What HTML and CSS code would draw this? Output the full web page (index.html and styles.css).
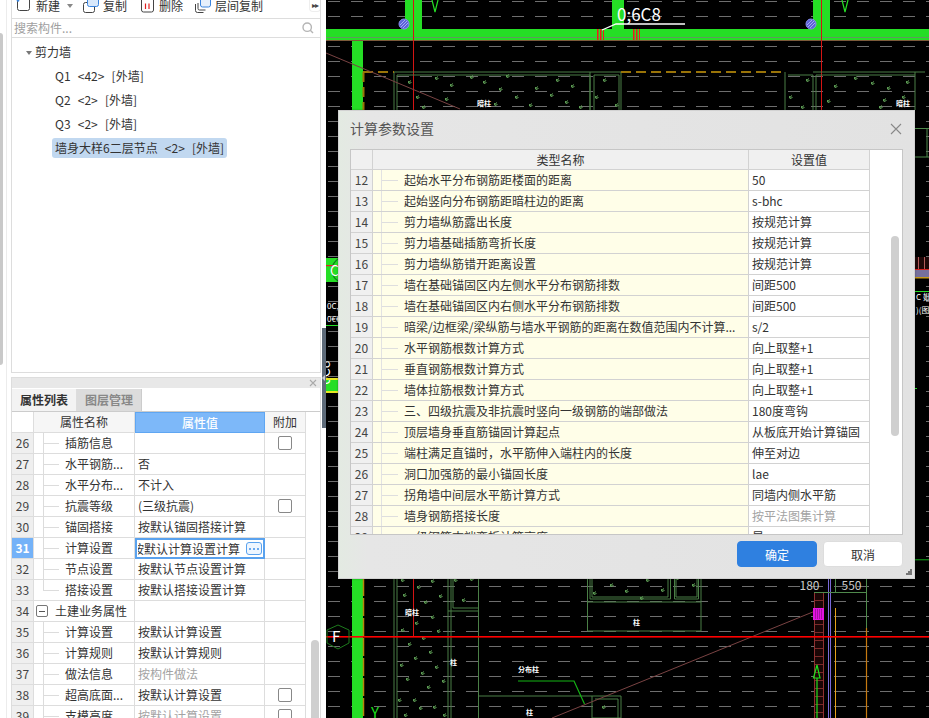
FILE: index.html
```html
<!DOCTYPE html>
<html lang="zh-CN">
<head>
<meta charset="utf-8">
<title>计算参数设置</title>
<link rel="stylesheet" href="styles.css">
</head>
<body>
<div class="app">
  <div class="gutter"><div class="gutter-thumb"></div></div>
  <div class="side">
    <section class="upper">
      <div class="toolbar">
        <svg class="ic ic-new" viewBox="0 0 15 11"><path d="M1.5 0V8.5a2 2 0 0 0 2 2h8a2 2 0 0 0 2-2V0" fill="none" stroke="#444"/><circle cx="2" cy="0.5" r="1.3" fill="#3b84de"/></svg>
        <span class="tool-label">新建</span>
        <span class="caret"></span>
        <svg class="ic ic-copy" viewBox="0 0 16 13"><rect x="0.5" y="2.5" width="11" height="10" rx="2" fill="#fff" stroke="#444"/><path d="M4.5 0V4.5a2 2 0 0 0 2 2h7a2 2 0 0 0 2-2V0" fill="#d8e8fb" stroke="#3b84de"/></svg>
        <span class="tool-label">复制</span>
        <svg class="ic ic-trash" viewBox="0 0 13 13"><path d="M0.5 0V10a2 2 0 0 0 2 2h8a2 2 0 0 0 2-2V0" fill="none" stroke="#444"/><path d="M4.5 3.5V9M8 3.5V9" stroke="#e02020" stroke-width="1.2"/></svg>
        <span class="tool-label">删除</span>
        <svg class="ic ic-layer" viewBox="0 0 16 13"><path d="M0.5 4V10.5a2 2 0 0 0 2 2h6" fill="none" stroke="#444"/><path d="M3 3V8.5a1.5 1.5 0 0 0 1.500 1.500h6" fill="none" stroke="#444"/><path d="M5.500 0V5a2 2 0 0 0 2 2h6a2 2 0 0 0 2-2V0" fill="#e6f0fc" stroke="#3b84de"/></svg>
        <span class="tool-label">层间复制</span>
        <span class="more">▸▸</span>
      </div>
      <div class="search">
        <span class="search-text">搜索构件...</span>
        <svg class="search-ic" viewBox="0 0 12 12"><circle cx="5.200" cy="5.200" r="4.200" fill="none" stroke="#b5b5b5" stroke-width="1.400"/><path d="M8.300 8.300L11 11" stroke="#b5b5b5" stroke-width="1.400"/></svg>
      </div>
      <div class="tree">
        <div class="tree-root"><span class="tree-caret"></span>剪力墙</div>
        <div class="tree-item">Q1 &lt;42&gt; [外墙]</div>
        <div class="tree-item">Q2 &lt;2&gt; [外墙]</div>
        <div class="tree-item">Q3 &lt;2&gt; [外墙]</div>
        <div class="tree-item tree-selected">墙身大样6二层节点 &lt;2&gt; [外墙]</div>
      </div>
    </section>
    <section class="props">
      <div class="props-head"><svg class="props-close" viewBox="0 0 8 8"><path d="M1 1L7 7M7 1L1 7" stroke="#aaa" stroke-width="1.100"/></svg></div>
      <div class="tabs">
        <div class="tab tab-on">属性列表</div>
        <div class="tab tab-off">图层管理</div>
      </div>
      <div class="props-body">
        <div class="ptable">
          <div class="prow phead"><div class="pnum"></div><div class="pname-h">属性名称</div><div class="pval-h">属性值</div><div class="padd">附加</div></div>
          <div class="prow"><div class="pnum">26</div><div class="pname tl">插筋信息</div><div class="pval"></div><div class="padd"><span class="check"></span></div></div>
          <div class="prow"><div class="pnum">27</div><div class="pname tl">水平钢筋...</div><div class="pval">否</div><div class="padd"></div></div>
          <div class="prow"><div class="pnum">28</div><div class="pname tl">水平分布...</div><div class="pval">不计入</div><div class="padd"></div></div>
          <div class="prow"><div class="pnum">29</div><div class="pname tl">抗震等级</div><div class="pval">(三级抗震)</div><div class="padd"><span class="check"></span></div></div>
          <div class="prow"><div class="pnum">30</div><div class="pname tl">锚固搭接</div><div class="pval">按默认锚固搭接计算</div><div class="padd"></div></div>
          <div class="prow"><div class="pnum pnum-on">31</div><div class="pname tl">计算设置</div><div class="pval pval-edit"><span class="edit-text"><span class="edit-inner">按默认计算设置计算</span></span><span class="edit-btn"><i></i><i></i><i></i></span></div><div class="padd"></div></div>
          <div class="prow"><div class="pnum">32</div><div class="pname tl">节点设置</div><div class="pval">按默认节点设置计算</div><div class="padd"></div></div>
          <div class="prow"><div class="pnum">33</div><div class="pname tl tl-end">搭接设置</div><div class="pval">按默认搭接设置计算</div><div class="padd"></div></div>
          <div class="prow"><div class="pnum">34</div><div class="pname pgroup"><span class="minus"></span>土建业务属性</div><div class="pval"></div><div class="padd"></div></div>
          <div class="prow"><div class="pnum">35</div><div class="pname tl">计算设置</div><div class="pval">按默认计算设置</div><div class="padd"></div></div>
          <div class="prow"><div class="pnum">36</div><div class="pname tl">计算规则</div><div class="pval">按默认计算规则</div><div class="padd"></div></div>
          <div class="prow"><div class="pnum">37</div><div class="pname tl">做法信息</div><div class="pval muted">按构件做法</div><div class="padd"></div></div>
          <div class="prow"><div class="pnum">38</div><div class="pname tl">超高底面...</div><div class="pval">按默认计算设置</div><div class="padd"><span class="check"></span></div></div>
          <div class="prow"><div class="pnum">39</div><div class="pname tl">支模高度</div><div class="pval muted">按默认计算设置</div><div class="padd"><span class="check"></span></div></div>
        </div>
        <div class="props-scroll"><div class="props-thumb"></div></div>
      </div>
    </section>
  </div>
  <div class="rail"><div class="rail-handle"><span class="rail-arrow"></span></div></div>
  <div class="canvas">
    <svg class="cad" viewBox="326 0 603 718" xmlns="http://www.w3.org/2000/svg">
      <defs>
        <pattern id="dashes" x="326" y="1" width="23" height="15" patternUnits="userSpaceOnUse"><rect x="2" y="0" width="12" height="1" fill="#6e6e6e"/></pattern>
        <pattern id="redhatch" x="0" y="0" width="3" height="40" patternUnits="userSpaceOnUse"><rect width="1.500" height="40" fill="#ee1c1c"/></pattern>
        <pattern id="ladder" x="814" y="0" width="10" height="8" patternUnits="userSpaceOnUse"><rect width="10" height="1" fill="#7a2a2a"/></pattern>
        <pattern id="vbar" x="0" y="0" width="6" height="10" patternUnits="userSpaceOnUse"><rect width="1" height="10" fill="#b25a5a"/></pattern>
        <path id="leaf" d="M-2 1L1 -1.500M-1.500 -1L-1 1.500L1.500 0.500" fill="none" stroke="#63a75a" stroke-width="1"/>
      </defs>
      <rect x="326" y="0" width="603" height="718" fill="#000"/>
      <rect x="326" y="0" width="603" height="718" fill="url(#dashes)"/>

      <g fill="#25de25">
        <rect x="326" y="29" width="603" height="11"/>
        <rect x="405" y="0" width="17" height="29"/>
        <rect x="612" y="0" width="12" height="29"/>
        <rect x="813" y="0" width="17" height="29"/>
        <rect x="352" y="41" width="11" height="677"/>
        <rect x="326" y="258" width="12" height="24"/>
        <rect x="326" y="380" width="12" height="11"/>
      </g>
      <rect x="326" y="37" width="603" height="1" fill="#5e9a5e"/>
      <rect x="326" y="40" width="603" height="1" fill="#7b5a3a"/>
      <path d="M432 0L435 12L438 0M842 0L845 12L848 0" fill="none" stroke="#25de25" stroke-width="1.200"/>

      <rect x="596" y="29" width="8" height="11" fill="url(#redhatch)"/>
      <rect x="632" y="29" width="8" height="11" fill="url(#redhatch)"/>

      <g fill="#5b62d8" stroke="#8a90ee"><circle cx="404" cy="24" r="5"/><circle cx="811" cy="24" r="5"/></g>
      <path d="M401 27L407 21M403 28L408 23M400 25L405 20M808 27L814 21M810 28L815 23M807 25L812 20" stroke="#c8ccff" stroke-width="0.700"/>

      <path d="M413.500 0V110M821.500 0V110M821.500 250V258" stroke="#d41414" stroke-width="1"/>
      <path d="M413.500 578V637" stroke="#d41414" stroke-width="1"/>

      <path d="M602 30L616 24H685" fill="none" stroke="#fff" stroke-width="1.300"/>
      <text class="cad-dim" x="617" y="21">0;6C8</text>

      <g fill="none" stroke="#4a7f46" stroke-width="1">
        <path d="M394 72H621M394 72V718M397 75H590V110M397 75V718M594 75H619V110M594 75V110M590 72V110M621 72V110"/>
        <path d="M785 72V110M788 75H813V110M816 75H915M816 75V110M813 72H925M915 72V110"/>
        <path d="M448 578V718M451 578V718M478.500 578V718M453 578V608H478M448 611H478"/>
        <path d="M590 578V599H670.500V578M592 578V597H668V578M674.500 578V599H698.500V578M676 578V597H697V578M587.500 578V631H701V578M587.500 602H701"/>
        <path d="M479 696H592M592 696V718H621V696H592M595 699H618V718"/>
      </g>
      <path d="M363 72H394M621 72H785M363.500 72V110" fill="none" stroke="#9a7408" stroke-width="2" stroke-dasharray="10 5"/>
      <path d="M363.500 578V718" fill="none" stroke="#b8860b" stroke-width="1.500" stroke-dasharray="18 2"/>

      <path d="M326 53L460 109M814 611.500L552 718" fill="none" stroke="#7a4343" stroke-width="1"/>

      <g>
        <use href="#leaf" x="437" y="78"/><use href="#leaf" x="472" y="77"/><use href="#leaf" x="508" y="76"/><use href="#leaf" x="558" y="80"/><use href="#leaf" x="410" y="82"/><use href="#leaf" x="452" y="85"/><use href="#leaf" x="485" y="82"/><use href="#leaf" x="501" y="89"/><use href="#leaf" x="537" y="88"/><use href="#leaf" x="573" y="86"/><use href="#leaf" x="418" y="97"/><use href="#leaf" x="447" y="99"/><use href="#leaf" x="517" y="97"/><use href="#leaf" x="552" y="95"/><use href="#leaf" x="496" y="104"/><use href="#leaf" x="531" y="105"/><use href="#leaf" x="567" y="102"/><use href="#leaf" x="581" y="107"/><use href="#leaf" x="424" y="107"/><use href="#leaf" x="597" y="97"/><use href="#leaf" x="605" y="80"/><use href="#leaf" x="617" y="105"/>
        <use href="#leaf" x="836" y="86"/><use href="#leaf" x="856" y="78"/><use href="#leaf" x="889" y="88"/><use href="#leaf" x="873" y="83"/><use href="#leaf" x="829" y="101"/><use href="#leaf" x="885" y="100"/><use href="#leaf" x="791" y="97"/><use href="#leaf" x="808" y="80"/><use href="#leaf" x="803" y="107"/><use href="#leaf" x="881" y="107"/><use href="#leaf" x="908" y="82"/><use href="#leaf" x="904" y="97"/>
        <use href="#leaf" x="403" y="580"/><use href="#leaf" x="433" y="581"/><use href="#leaf" x="419" y="587"/><use href="#leaf" x="441" y="596"/><use href="#leaf" x="405" y="595"/><use href="#leaf" x="426" y="602"/><use href="#leaf" x="433" y="617"/><use href="#leaf" x="417" y="623"/><use href="#leaf" x="403" y="630"/><use href="#leaf" x="439" y="631"/><use href="#leaf" x="424" y="638"/><use href="#leaf" x="410" y="644"/><use href="#leaf" x="431" y="652"/><use href="#leaf" x="416" y="658"/><use href="#leaf" x="402" y="665"/><use href="#leaf" x="437" y="667"/><use href="#leaf" x="423" y="673"/><use href="#leaf" x="444" y="681"/><use href="#leaf" x="408" y="679"/><use href="#leaf" x="429" y="687"/><use href="#leaf" x="400" y="700"/><use href="#leaf" x="415" y="700"/><use href="#leaf" x="421" y="708"/><use href="#leaf" x="435" y="707"/><use href="#leaf" x="406" y="715"/><use href="#leaf" x="445" y="715"/>
        <use href="#leaf" x="464" y="600"/><use href="#leaf" x="456" y="580"/><use href="#leaf" x="472" y="579"/><use href="#leaf" x="612" y="585"/><use href="#leaf" x="627" y="591"/><use href="#leaf" x="642" y="598"/><use href="#leaf" x="663" y="590"/><use href="#leaf" x="595" y="593"/><use href="#leaf" x="648" y="580"/><use href="#leaf" x="694" y="585"/><use href="#leaf" x="678" y="578"/><use href="#leaf" x="604" y="707"/>
      </g>

      <g class="cad-tag">
        <text x="477" y="106">暗柱</text><text x="896" y="106">暗柱</text>
        <text x="405" y="615">暗柱</text><text x="633" y="625">柱</text><text x="450" y="665">柱</text><text x="518" y="672">分布柱</text><text x="526" y="715">柱</text>
      </g>

      <path d="M518 681H574L584.500 704" fill="none" stroke="#15b515" stroke-width="1.200"/>

      <rect x="814" y="592" width="10" height="126" fill="#1a0505"/>
      <rect x="814" y="592" width="10" height="126" fill="url(#ladder)"/>
      <path d="M814.500 592V718M823.500 592V718" stroke="#8f3030" stroke-width="1"/>
      <path d="M828.500 578V718M830.500 578V718" stroke="#7a6ad8" stroke-width="1"/>
      <path d="M835.500 608V718" stroke="#e6a21a" stroke-width="1"/>
      <path d="M866.500 628V718" stroke="#c77a10" stroke-width="1.200"/>
      <path d="M866.500 578V628M814 592.500H866M835.500 578V592" stroke="#4f8a4c" stroke-width="1"/>
      <rect x="813" y="608" width="11" height="12" fill="#e313e3"/>
      <path d="M815 610h7M815 612h7M815 614h7M815 616h7M815 618h7" stroke="#4a0a4a" stroke-width="0.800" stroke-dasharray="1 1"/>
      <path d="M817 665L813.500 678H820L817 665ZM817 678V718" fill="none" stroke="#1de01d" stroke-width="1.200"/>
      <text class="cad-size" x="799.500" y="590">180</text>
      <text class="cad-size" x="841.500" y="590">550</text>

      <rect x="326" y="636" width="603" height="1.600" fill="#ff0000"/>

      <path d="M338 625L349 630V643L338 649L327 643V630Z" fill="none" stroke="#1d7a1d" stroke-width="1"/>
      <text class="cad-f" x="332" y="642">F</text>
      <text class="cad-y" x="371" y="718">Y</text>

      <circle cx="345" cy="270" r="13" fill="none" stroke="#0f7a1a" stroke-width="1.200"/>
      <rect x="326" y="265" width="12" height="1.200" fill="#e02020"/>
      <text class="cad-left" x="330" y="276">C</text>
      <text class="cad-small" x="327" y="309">0C,</text>
      <text class="cad-small" x="327" y="322">0€€</text>
      <rect x="326" y="325" width="12" height="1" fill="#25de25"/>
      <text class="cad-rot" transform="translate(330 385) rotate(-90)">6C8</text>
      <rect x="326" y="378" width="12" height="2" fill="#e8e820"/>
      <rect x="326" y="391" width="12" height="2" fill="#e8e820"/>

      <g>
        <path d="M915 128.500H929M915 157H929M927 128V157" fill="none" stroke="#4f8a4c" stroke-width="1"/>
        <rect x="915" y="257" width="14" height="12" fill="#200808"/>
        <rect x="915" y="257" width="14" height="12" fill="url(#vbar)"/>
        <rect x="915" y="269" width="14" height="1" fill="#d42020"/>
        <rect x="915" y="270" width="14" height="7" fill="#76709c"/>
        <rect x="915" y="277" width="14" height="1.500" fill="#c89a18"/>
        <rect x="915" y="291" width="14" height="1" fill="#25de25"/>
        <rect x="915" y="388" width="2" height="1" fill="#25de25"/>
        <rect x="915" y="559" width="14" height="1.400" fill="#0e7a12"/>
      </g>
      <text class="cad-small" x="916" y="300">C 妣</text>
      <text class="cad-small" x="916" y="313">)(图</text>
    </svg>
  </div>
</div>

<div class="dialog">
  <div class="dialog-head">
    <span class="dialog-title">计算参数设置</span>
    <svg class="dialog-x" viewBox="0 0 12 12"><path d="M1 1L11 11M11 1L1 11" stroke="#888" stroke-width="1.100"/></svg>
  </div>
  <div class="dtable-wrap">
    <div class="dtable">
      <div class="drow dhead"><div class="dnum"></div><div class="dname-h">类型名称</div><div class="dval-h">设置值</div></div>
      <div class="drow"><div class="dnum">12</div><div class="dname">起始水平分布钢筋距楼面的距离</div><div class="dval">50</div></div>
      <div class="drow"><div class="dnum">13</div><div class="dname">起始竖向分布钢筋距暗柱边的距离</div><div class="dval">s-bhc</div></div>
      <div class="drow"><div class="dnum">14</div><div class="dname">剪力墙纵筋露出长度</div><div class="dval">按规范计算</div></div>
      <div class="drow"><div class="dnum">15</div><div class="dname">剪力墙基础插筋弯折长度</div><div class="dval">按规范计算</div></div>
      <div class="drow"><div class="dnum">16</div><div class="dname">剪力墙纵筋错开距离设置</div><div class="dval">按规范计算</div></div>
      <div class="drow"><div class="dnum">17</div><div class="dname">墙在基础锚固区内左侧水平分布钢筋排数</div><div class="dval">间距500</div></div>
      <div class="drow"><div class="dnum">18</div><div class="dname">墙在基础锚固区内右侧水平分布钢筋排数</div><div class="dval">间距500</div></div>
      <div class="drow"><div class="dnum">19</div><div class="dname">暗梁/边框梁/梁纵筋与墙水平钢筋的距离在数值范围内不计算...</div><div class="dval">s/2</div></div>
      <div class="drow"><div class="dnum">20</div><div class="dname">水平钢筋根数计算方式</div><div class="dval">向上取整+1</div></div>
      <div class="drow"><div class="dnum">21</div><div class="dname">垂直钢筋根数计算方式</div><div class="dval">向上取整+1</div></div>
      <div class="drow"><div class="dnum">22</div><div class="dname">墙体拉筋根数计算方式</div><div class="dval">向上取整+1</div></div>
      <div class="drow"><div class="dnum">23</div><div class="dname">三、四级抗震及非抗震时竖向一级钢筋的端部做法</div><div class="dval">180度弯钩</div></div>
      <div class="drow"><div class="dnum">24</div><div class="dname">顶层墙身垂直筋锚固计算起点</div><div class="dval">从板底开始计算锚固</div></div>
      <div class="drow"><div class="dnum">25</div><div class="dname">端柱满足直锚时，水平筋伸入端柱内的长度</div><div class="dval">伸至对边</div></div>
      <div class="drow"><div class="dnum">26</div><div class="dname">洞口加强筋的最小锚固长度</div><div class="dval">lae</div></div>
      <div class="drow"><div class="dnum">27</div><div class="dname">拐角墙中间层水平筋计算方式</div><div class="dval">同墙内侧水平筋</div></div>
      <div class="drow"><div class="dnum">28</div><div class="dname">墙身钢筋搭接长度</div><div class="dval muted">按平法图集计算</div></div>
      <div class="drow"><div class="dnum">29</div><div class="dname">一级钢筋末端弯折计算高度</div><div class="dval">是</div></div>
    </div>
    <div class="dscroll"><div class="dthumb"></div></div>
  </div>
  <div class="dialog-foot">
    <button class="btn btn-primary" type="button">确定</button>
    <button class="btn" type="button">取消</button>
  </div>
  <svg class="grip" viewBox="0 0 6 6"><path d="M4 0h2v2H4zM2 2h2v2H2zM4 2h2v2H4zM0 4h2v2H0zM2 4h2v2H2zM4 4h2v2H4z" fill="#777"/></svg>
</div>
</body>
</html>
```

FILE: styles.css
```css
* { box-sizing: border-box; }
html, body { margin: 0; padding: 0; width: 929px; height: 718px; overflow: hidden; background: #000; }
body { font: 12px/1.2 "Noto Sans CJK SC", "Noto Sans", sans-serif; color: #333; }

.app { display: flex; width: 929px; height: 718px; }

/* left gutter */
.gutter { width: 11px; height: 718px; background: linear-gradient(#ececec, #ececec) 6px 0 / 1px 100% no-repeat #fff; padding-top: 33px; }
.gutter-thumb { width: 3px; height: 332px; background: #c9c9c9; border-radius: 0 3px 3px 0; }

/* side column */
.side { width: 310px; height: 718px; display: flex; flex-direction: column; background: #fff; }
.upper { height: 373px; border: 1px solid #ddd; border-top: 0; display: flex; flex-direction: column; flex: none; }

.toolbar { height: 19px; flex: none; display: flex; align-items: flex-start; border-bottom: 1px solid #ddd; position: relative; overflow: hidden; }
.tool-label { line-height: 12px; font-size: 12px; height: 12px; color: #333; }
.ic { display: block; flex: none; }
.ic-new { width: 15px; height: 11px; margin-left: 4px; margin-right: 5px; }
.caret { width: 0; height: 0; border: 3px solid transparent; border-top: 4px solid #888; margin: 4px 0 0 7px; }
.ic-copy { width: 16px; height: 13px; margin-left: 10px; margin-right: 4px; }
.ic-trash { width: 13px; height: 13px; margin-left: 14px; margin-right: 5px; }
.ic-layer { width: 16px; height: 13px; margin-left: 12px; margin-right: 4px; }
.more { position: absolute; left: 297px; top: -3px; width: 12px; height: 15px; font-size: 8px; line-height: 15px; letter-spacing: -1px; text-align: center; color: #444; background: #fff; border: 1px solid #eee; border-top: 0; border-radius: 0 0 4px 4px; }

.search { height: 19px; flex: none; display: flex; align-items: center; justify-content: space-between; padding: 0 6px 0 2px; border-bottom: 1px solid #ddd; }
.search-text { color: #a0a0a0; }
.search-ic { width: 12px; height: 12px; }

.tree { flex: 1; padding-top: 3px; }
.tree-root { height: 25px; line-height: 22px; padding-left: 23px; position: relative; }
.tree-caret { position: absolute; left: 14px; top: 10px; border: 3px solid transparent; border-top: 4px solid #777; }
.tree-item { height: 20px; line-height: 20px; margin: 0 0 4px 40px; padding: 0 3px; width: max-content; word-spacing: 4.5px; border-radius: 3px; }
.tree-selected { background: #c1d8f0; }

/* properties */
.props { margin-top: 4px; flex: 1; min-height: 0; display: flex; flex-direction: column; border-left: 1px solid #ddd; border-right: 1px solid #ddd; overflow: hidden; }
.props-head { height: 11px; flex: none; background: #e8e8e8; border-top: 1px solid #ddd; position: relative; }
.props-close { position: absolute; right: 3px; top: 1px; width: 8px; height: 8px; }
.tabs { height: 24px; flex: none; display: flex; border-bottom: 1px solid #ccc; padding-top: 1px; background: #fff; }
.tab { width: 65px; text-align: center; font-weight: 700; line-height: 22px; }
.tab-on { background: #f3f3f3; color: #333; border-right: 1px solid #ddd; }
.tab-off { background: #dcdcdc; color: #888; border-right: 1px solid #ccc; }

.props-body { flex: 1; min-height: 0; display: flex; overflow: hidden; }
.ptable { width: 294px; flex: none; }
.prow { display: grid; grid-template-columns: 22px 101px 130px 41px; height: 21px; line-height: 20px; }
.prow > div { border-right: 1px solid #ddd; border-bottom: 1px solid #ddd; white-space: nowrap; overflow: hidden; }
.pnum { background: #efefef; text-align: center; color: #444; }
.phead .pnum { background: #fff; }
.pnum-on { background: #74b2f8; color: #fff; font-weight: 700; }
.pname-h { background: #f6f6f6; text-align: center; }
.pval-h { background: #7db8f9; color: #fff; text-align: center; font-weight: 500; }
.phead > .pval-h { border: 1px solid #5fa6f2; }
.phead .padd { background: #f6f6f6; }
.padd { text-align: center; }
.pname { padding-left: 31px; }
.tl { background: linear-gradient(#dcdcdc, #dcdcdc) 9px 0 / 1px 100% no-repeat, linear-gradient(#dcdcdc, #dcdcdc) 9px 10px / 16px 1px no-repeat; }
.tl-end { background: linear-gradient(#dcdcdc, #dcdcdc) 9px 0 / 1px 11px no-repeat, linear-gradient(#dcdcdc, #dcdcdc) 9px 10px / 16px 1px no-repeat; }
.pgroup { padding-left: 2px; display: flex; align-items: center; }
.minus { width: 12px; height: 12px; margin-right: 7px; border: 1px solid #777; border-radius: 2px; background: linear-gradient(#555, #555) center / 6px 1px no-repeat; flex: none; }
.pval { padding-left: 3px; }
.muted { color: #a3a3a3; }
.check { display: inline-block; width: 14px; height: 14px; margin-top: 3px; border: 1px solid #888; border-radius: 2px; background: #fff; vertical-align: top; }
.prow > .pval-edit { border: 2px solid #5aa2ee; padding: 0; display: flex; align-items: center; background: #fff; }
.edit-text { width: 107px; margin-left: 1px; height: 17px; overflow: hidden; direction: ltr; display: block; }
.edit-inner { display: block; margin-left: -6px; line-height: 17px; white-space: nowrap; }
.edit-btn { width: 16px; height: 13px; margin-left: 1px; border: 1px solid #5aa2ee; border-radius: 3px; display: flex; align-items: center; justify-content: center; gap: 2px; flex: none; background: #eef6ff; }
.edit-btn i { width: 2px; height: 2px; background: #3f8fe8; border-radius: 50%; display: block; }

.props-scroll { flex: 1; padding: 228px 3px 0 5px; }
.props-thumb { width: 8px; height: 100px; background: #cfcfcf; border-radius: 4px; }

/* rail */
.rail { width: 5px; height: 718px; background: #fff; padding-top: 328px; flex: none; }
.rail-handle { width: 4px; height: 100px; margin-left: 1px; background: #5e6b79; display: flex; align-items: center; }
.rail-arrow { border: 3px solid transparent; border-right: 3px solid #c8ccd2; border-left: 0; }

/* canvas */
.canvas { width: 603px; height: 718px; flex: none; }
.cad { display: block; width: 603px; height: 718px; }
.cad text { font-family: "Noto Sans CJK SC", "Noto Sans", sans-serif; }
.cad-dim { font-size: 17px; fill: #fff; letter-spacing: 0; }
.cad-tag text { font-size: 7px; font-weight: 700; fill: #fff; }
.cad-size { font-size: 12px; fill: #c9c9c9; }
.cad-f { font-size: 15px; fill: #fff; }
.cad-y { font-size: 15px; fill: #1de01d; }
.cad-left { font-size: 14px; fill: #fff; }
.cad-small { font-size: 8px; fill: #fff; }
.cad-rot { font-size: 14px; fill: #fff; }

/* dialog */
.dialog { position: absolute; left: 338px; top: 110px; width: 577px; height: 469px; background: linear-gradient(90deg, #e3eae2 0, #e6e6e6 5%, #e2e2e2 100%); border: 1px solid #d2d2d2; box-shadow: 0 0 2px rgba(0,0,0,.3); display: flex; flex-direction: column; padding: 0 11px 0 11px; }
.dialog-head { height: 38px; flex: none; display: flex; align-items: center; justify-content: space-between; padding: 0 1px 3px 0; }
.dialog-title { font-size: 14px; color: #555; }
.dialog-x { width: 12px; height: 12px; }
.dtable-wrap { height: 386px; flex: none; display: flex; border: 1px solid #c6c6c6; background: #fff; overflow: hidden; }
.dtable { width: 519px; flex: none; }
.drow { display: grid; grid-template-columns: 22px 376px 121px; height: 21px; line-height: 20px; }
.drow > div { border-right: 1px solid #d2d2d2; border-bottom: 1px solid #d2d2d2; white-space: nowrap; overflow: hidden; }
.dhead { height: 20px; line-height: 19px; }
.dhead > div { background: #f0f0f0; }
.dnum { background: #f0f0f0; text-align: center; color: #444; }
.dname-h, .dval-h { text-align: center; }
.dname { background: linear-gradient(#e2e2e2, #e2e2e2) 8px 0 / 1px 100% no-repeat, linear-gradient(#dedede, #dedede) 9px 10px / 16px 1px no-repeat, #fffee8; padding-left: 31px; padding-right: 1px; text-overflow: ellipsis; }
.dval { padding-left: 3px; background: #fff; }
.dscroll { flex: 1; padding: 86px 0 0 21px; }
.dthumb { width: 8px; height: 200px; background: #cfcfcf; border-radius: 4px; }
.dialog-foot { flex: 1; display: flex; justify-content: flex-end; gap: 6px; padding-top: 6px; }
.btn { width: 80px; height: 26px; border: 1px solid #ddd; border-radius: 4px; background: #fff; color: #333; font: 12px "Noto Sans CJK SC", sans-serif; padding: 0; }
.btn-primary { background: #2f80e0; border-color: #2f80e0; color: #fff; }
.grip { position: absolute; right: 2px; bottom: 3px; width: 6px; height: 6px; }
```
